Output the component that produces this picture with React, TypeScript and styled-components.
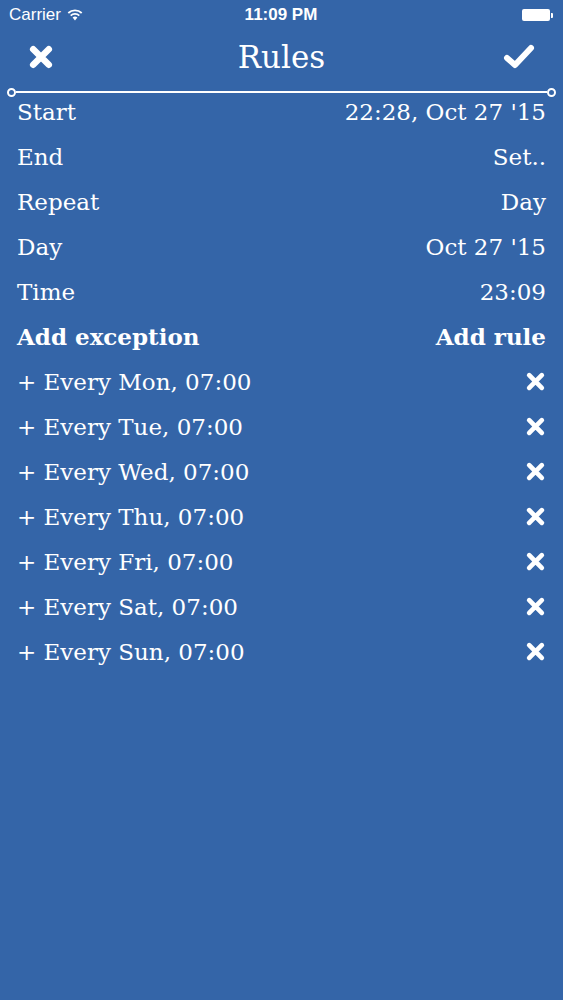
import React from 'react';
import styled, { createGlobalStyle } from 'styled-components';

const Global = createGlobalStyle`
  html, body { margin: 0; padding: 0; background: #3465a8; }
  body { width: 563px; height: 1000px; overflow: hidden; }
`;

const Screen = styled.div`
  width: 563px;
  height: 1000px;
  background: #3465a8;
  color: #fff;
  display: flex;
  flex-direction: column;
`;

const StatusBar = styled.div`
  height: 30px;
  display: grid;
  grid-template-columns: 1fr auto 1fr;
  align-items: center;
  padding: 0 10px 0 9px;
  font-family: 'Liberation Sans', Arial, sans-serif;
  font-size: 17px;
`;

const Carrier = styled.div`
  display: flex;
  align-items: center;
  gap: 6px;
`;

const Clock = styled.div`
  font-weight: 700;
  font-size: 17px;
`;

const Battery = styled.div`
  justify-self: end;
  display: flex;
  align-items: center;
  gap: 1px;
`;

const BatteryBody = styled.div`
  width: 28px;
  height: 12px;
  background: #fff;
  border-radius: 2px;
`;

const BatteryTip = styled.div`
  width: 2px;
  height: 5px;
  background: #fff;
  border-radius: 0 1px 1px 0;
`;

const NavBar = styled.div`
  height: 54px;
  display: grid;
  grid-template-columns: 80px 1fr 80px;
  align-items: center;
`;

const NavButton = styled.div<{ $align: 'start' | 'end' }>`
  display: flex;
  justify-content: ${p => (p.$align === 'start' ? 'flex-start' : 'flex-end')};
  padding: ${p => (p.$align === 'start' ? '0 0 0 28px' : '0 28px 0 0')};
`;

const Title = styled.div`
  text-align: center;
  font-family: 'DejaVu Serif', serif;
  font-size: 31px;
`;

const Divider = styled.div`
  margin: 4px 7px 0 7px;
  height: 8px;
  display: flex;
  align-items: center;
`;

const Dot = styled.div`
  width: 5px;
  height: 5px;
  border: 2px solid #fff;
  border-radius: 50%;
  flex-shrink: 0;
`;

const Rule = styled.div`
  flex: 1;
  height: 2px;
  background: #fff;
`;

const List = styled.div`
  margin-top: -7px;
  display: flex;
  flex-direction: column;
  font-family: 'DejaVu Serif', serif;
  font-size: 23px;
`;

const Row = styled.div<{ $bold?: boolean }>`
  height: 45px;
  display: flex;
  align-items: center;
  justify-content: space-between;
  padding: 0 17px;
  font-weight: ${p => (p.$bold ? 700 : 400)};
`;

const XMark = ({ size = 20, stroke = 5 }: { size?: number; stroke?: number }) => (
  <svg width={size} height={size} viewBox="0 0 20 20">
    <path d="M4 4 L16 16 M16 4 L4 16" stroke="#fff" strokeWidth={stroke} strokeLinecap="round" fill="none" />
  </svg>
);

const CheckMark = () => (
  <svg width={32} height={26} viewBox="0 0 32 26">
    <path d="M4 14 L12 21 L28 4" stroke="#fff" strokeWidth={6} strokeLinecap="round" strokeLinejoin="round" fill="none" />
  </svg>
);

const Wifi = () => (
  <svg width={16} height={12} viewBox="0 0 16 12">
    <path d="M8 11.5 L5.6 8.6 A3.6 3.6 0 0 1 10.4 8.6 Z" fill="#fff" />
    <path d="M3.7 6.6 A6.2 6.2 0 0 1 12.3 6.6" stroke="#fff" strokeWidth={1.8} fill="none" />
    <path d="M1.3 4 A9.6 9.6 0 0 1 14.7 4" stroke="#fff" strokeWidth={1.8} fill="none" />
  </svg>
);

const settings = [
  ['Start', "22:28, Oct 27 '15"],
  ['End', 'Set..'],
  ['Repeat', 'Day'],
  ['Day', "Oct 27 '15"],
  ['Time', '23:09'],
];

const rules = ['Mon', 'Tue', 'Wed', 'Thu', 'Fri', 'Sat', 'Sun'];

export default function App() {
  return (
    <Screen>
      <Global />
      <StatusBar>
        <Carrier>
          Carrier <Wifi />
        </Carrier>
        <Clock>11:09 PM</Clock>
        <Battery>
          <BatteryBody />
          <BatteryTip />
        </Battery>
      </StatusBar>
      <NavBar>
        <NavButton $align="start">
          <XMark size={26} stroke={5} />
        </NavButton>
        <Title>Rules</Title>
        <NavButton $align="end">
          <CheckMark />
        </NavButton>
      </NavBar>
      <Divider>
        <Dot />
        <Rule />
        <Dot />
      </Divider>
      <List>
        {settings.map(([label, value]) => (
          <Row key={label}>
            <span>{label}</span>
            <span>{value}</span>
          </Row>
        ))}
        <Row $bold>
          <span>Add exception</span>
          <span>Add rule</span>
        </Row>
        {rules.map(day => (
          <Row key={day}>
            <span>+ Every {day}, 07:00</span>
            <XMark size={21} stroke={4.5} />
          </Row>
        ))}
      </List>
    </Screen>
  );
}
